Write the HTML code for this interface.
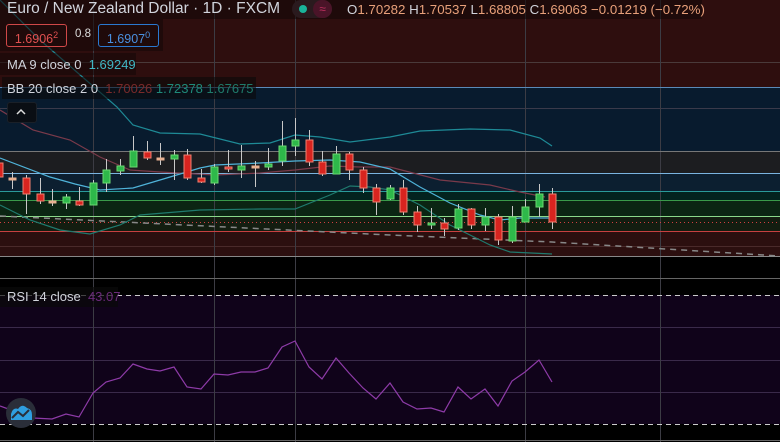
<!DOCTYPE html><html><head><meta charset="utf-8"><style>
body{margin:0;background:#000;width:780px;height:442px;overflow:hidden;font-family:"Liberation Sans",sans-serif}
svg{position:absolute;left:0;top:0}
.t{position:absolute;white-space:nowrap;font-size:13px;color:#d1d4dc}
</style></head><body>
<svg width="780" height="442" viewBox="0 0 780 442">
<rect x="0" y="0" width="780" height="87" fill="#2e0e0e"/>
<rect x="0" y="87" width="780" height="64" fill="#081b2e"/>
<rect x="0" y="151" width="780" height="22" fill="#1c1d20"/>
<rect x="0" y="173" width="780" height="18" fill="#0c1f30"/>
<rect x="0" y="191" width="780" height="9" fill="#03231f"/>
<rect x="0" y="200" width="780" height="16" fill="#0b2513"/>
<rect x="0" y="216" width="780" height="15" fill="#131d10"/>
<rect x="0" y="231" width="780" height="25" fill="#2c0f0f"/>
<rect x="0" y="295" width="780" height="129" fill="#10031a"/>
<g stroke="#4a3a3a" stroke-width="1">
<line x1="0" y1="62.5" x2="780" y2="62.5"/>
</g>
<g stroke="#3a3a4a" stroke-width="1">
<line x1="0" y1="108.5" x2="780" y2="108.5"/>
<line x1="0" y1="246.5" x2="780" y2="246.5" stroke="#4a2a2a"/>
<line x1="0" y1="327.5" x2="780" y2="327.5" stroke="#3a2a4a"/>
<line x1="0" y1="360.5" x2="780" y2="360.5" stroke="#3a2a4a"/>
<line x1="0" y1="392.5" x2="780" y2="392.5" stroke="#3a2a4a"/>
</g>
<g stroke="#3c3c44" stroke-width="1">
<line x1="93.5" y1="0" x2="93.5" y2="442"/>
<line x1="214.5" y1="0" x2="214.5" y2="442"/>
<line x1="295.5" y1="0" x2="295.5" y2="442"/>
<line x1="525.5" y1="0" x2="525.5" y2="442"/>
<line x1="660.5" y1="0" x2="660.5" y2="442"/>
</g>
<line x1="0" y1="87.5" x2="780" y2="87.5" stroke="#5a8ab8"/>
<line x1="0" y1="151.5" x2="780" y2="151.5" stroke="#777"/>
<line x1="0" y1="173.5" x2="780" y2="173.5" stroke="#7ab4e0"/>
<line x1="0" y1="191.5" x2="780" y2="191.5" stroke="#2a9a9a"/>
<line x1="0" y1="200.5" x2="780" y2="200.5" stroke="#3a9a4a"/>
<line x1="0" y1="216.5" x2="780" y2="216.5" stroke="#8ad88a"/>
<line x1="0" y1="222.5" x2="780" y2="222.5" stroke="#d04040" stroke-dasharray="1 3"/>
<line x1="0" y1="231.5" x2="780" y2="231.5" stroke="#c84040"/>
<line x1="0" y1="256.5" x2="780" y2="256.5" stroke="#888"/>
<line x1="0" y1="278.5" x2="780" y2="278.5" stroke="#666"/>
<line x1="0" y1="295.5" x2="780" y2="295.5" stroke="#ccc" stroke-dasharray="5 4"/>
<line x1="0" y1="424.5" x2="780" y2="424.5" stroke="#ccc" stroke-dasharray="5 4"/>
<line x1="0" y1="440.5" x2="780" y2="440.5" stroke="#666"/>
<polyline fill="none" stroke="#888" stroke-width="1.5" stroke-dasharray="6 5" points="0,216 390,235 552,242 780,256"/>
<polyline fill="none" stroke="#1e8a96" stroke-width="1.2" points="0,0 40,40 117,107 133,125 160,133 200,134 240,144 270,143 295,135 320,137 350,142 390,137 420,131 470,129 510,130 540,138 552,146"/>
<polyline fill="none" stroke="#7a3a4a" stroke-width="1.2" points="0,110 33,130 70,140 100,157 130,170 160,172 215,175 260,173 295,170 330,166 360,167 390,167 440,180 490,185 520,192 545,197"/>
<polyline fill="none" stroke="#1f7a6e" stroke-width="1.2" points="0,205 30,220 60,230 90,234 120,225 140,215 200,210 260,209 295,209 330,195 350,186 370,187 390,190 420,205 450,225 470,235 490,245 510,252 552,254"/>
<polyline fill="none" stroke="#4fb3d9" stroke-width="1.2" points="0,158 50,177 75,184 100,190 133,188 160,180 200,168 215,165 260,163 295,161 330,160 360,162 390,169 420,187 450,203 480,215 500,220 520,218 552,218"/>
<g id="c" stroke-width="1">
</g>
<polyline fill="none" stroke="#8e3ba8" stroke-width="1.2" points="0,406 33,418 52,419 66,414 79,417 93,393 106,382 120,378 133,364 147,369 160,371 174,367 187,387 201,389 214,374 228,375 241,372 255,372 268,368 282,347 295,341 309,367 322,379 336,358 349,373 363,388 376,399 390,383 403,402 417,409 431,408 444,412 458,387 471,399 485,389 498,406 512,381 525,372 539,360 552,382"/>
<circle cx="21" cy="413" r="15" fill="#2a2e39"/>
<path d="M11,420 L11,414 Q13,407 18,409 Q22,403 27,408 Q32,409 32,415 L32,420 Z" fill="#2f9fe0"/>
<polyline points="12,418 18,412 23,416 29,410" fill="none" stroke="#2a2e39" stroke-width="2"/>
</svg>
<script>
var d=[[-1,163,177,160,180,0],[12,178,179,172,189,2],[26,178,194,175,214,0],[40,194,201,178,204,0],[52,201,203,189,206,2],[66,197,203,194,209,1],[79,201,205,187,206,0],[93,183,205,180,205,1],[106,170,183,159,192,1],[120,166,171,159,175,1],[133,151,167,136,167,1],[147,152,158,141,160,0],[160,158,159,143,165,2],[174,155,159,150,180,1],[187,155,178,149,180,0],[201,178,182,169,183,0],[214,167,183,164,185,1],[228,167,169,150,172,0],[241,166,170,145,178,1],[255,166,167,161,187,2],[268,164,167,148,170,1],[282,146,161,121,166,1],[295,140,146,118,156,1],[309,140,162,130,166,0],[322,162,174,151,176,0],[336,154,174,146,174,1],[349,154,170,152,180,0],[363,170,188,167,193,0],[376,188,202,184,215,0],[390,188,199,185,200,1],[403,188,212,180,215,0],[417,212,225,206,232,0],[431,223,225,208,229,1],[444,223,229,218,236,0],[458,209,228,204,230,1],[471,209,225,208,229,0],[485,217,225,208,231,1],[498,217,240,214,245,0],[512,217,241,206,243,1],[525,207,222,199,222,1],[539,194,207,184,217,1],[552,194,222,188,229,0]];
var g=document.getElementById('c'),s='';
d.forEach(function(c){var x=c[0],f=c[5]==1?'#2eb84a':c[5]==0?'#d8241f':'#e8b090',st=c[5]==1?'#6ad870':c[5]==0?'#f08070':'#e8b090';
s+='<line x1="'+(x+.5)+'" y1="'+c[3]+'" x2="'+(x+.5)+'" y2="'+c[4]+'" stroke="#c8c8c8"/>';
var h=Math.max(c[2]-c[1],2);s+='<rect x="'+(x-3)+'" y="'+c[1]+'" width="7" height="'+h+'" fill="'+f+'" stroke="'+st+'"/>';});
g.innerHTML=s;
</script>
<div style="position:absolute;left:0;top:0;width:702px;height:19px;background:rgba(20,8,8,.6)"></div>
<div class="t" style="left:7px;top:0px;font-size:15.5px">Euro / New Zealand Dollar · 1D · FXCM</div>
<div style="position:absolute;left:292px;top:0;width:40px;height:18px;border-radius:9px;background:#2a1a1e"></div>
<div style="position:absolute;left:299px;top:5px;width:8px;height:8px;border-radius:4px;background:#1ab39a"></div>
<div style="position:absolute;left:313px;top:0;width:19px;height:18px;border-radius:9px;background:#4a1428;color:#c03060;font-size:12px;text-align:center;line-height:18px">≈</div>
<div class="t" style="left:347px;top:2px;font-size:13.3px;color:#e8a07a"><span style="color:#d1d4dc">O</span>1.70282 <span style="color:#d1d4dc">H</span>1.70537 <span style="color:#d1d4dc">L</span>1.68805 <span style="color:#d1d4dc">C</span>1.69063 −0.01219 (−0.72%)</div>
<div style="position:absolute;left:0;top:19px;width:163px;height:32px;background:rgba(20,8,8,.55)"></div>
<div class="t" style="left:6px;top:24px;width:59px;height:21px;border:1px solid #d04848;border-radius:3px;color:#e05050;line-height:21px;text-align:center;font-size:12.5px">1.6906<sup style="font-size:9px">2</sup></div>
<div class="t" style="left:75px;top:28px;font-size:11.5px;color:#ddd">0.8</div>
<div class="t" style="left:98px;top:24px;width:59px;height:21px;border:1px solid #2a78d0;border-radius:3px;color:#4a90e0;line-height:21px;text-align:center;font-size:12.5px">1.6907<sup style="font-size:9px">0</sup></div>
<div style="position:absolute;left:0;top:53px;width:136px;height:22px;background:rgba(20,8,8,.55)"></div>
<div class="t" style="left:7px;top:57px">MA 9 close 0 &nbsp;<span style="color:#41b6c4">1.69249</span></div>
<div style="position:absolute;left:2px;top:77px;width:254px;height:22px;background:rgba(10,10,10,.6)"></div>
<div class="t" style="left:7px;top:81px">BB 20 close 2 0 &nbsp;<span style="color:#7a2a2a">1.70026</span> <span style="color:#1f8a7a">1.72378</span> <span style="color:#1f7a6a">1.67675</span></div>
<div style="position:absolute;left:7px;top:102px;width:28px;height:19px;border-radius:3px;background:#0a0e14;border:1px solid #1a2028"></div>
<svg width="780" height="442" style="pointer-events:none"><polyline points="17,114 21,110 25,114" fill="none" stroke="#ddd" stroke-width="1.5"/></svg>
<div style="position:absolute;left:0;top:287px;width:118px;height:20px;background:rgba(10,10,10,.7)"></div>
<div class="t" style="left:7px;top:289px">RSI 14 close &nbsp;<span style="color:#6a2a7a">43.07</span></div>
</body></html>
